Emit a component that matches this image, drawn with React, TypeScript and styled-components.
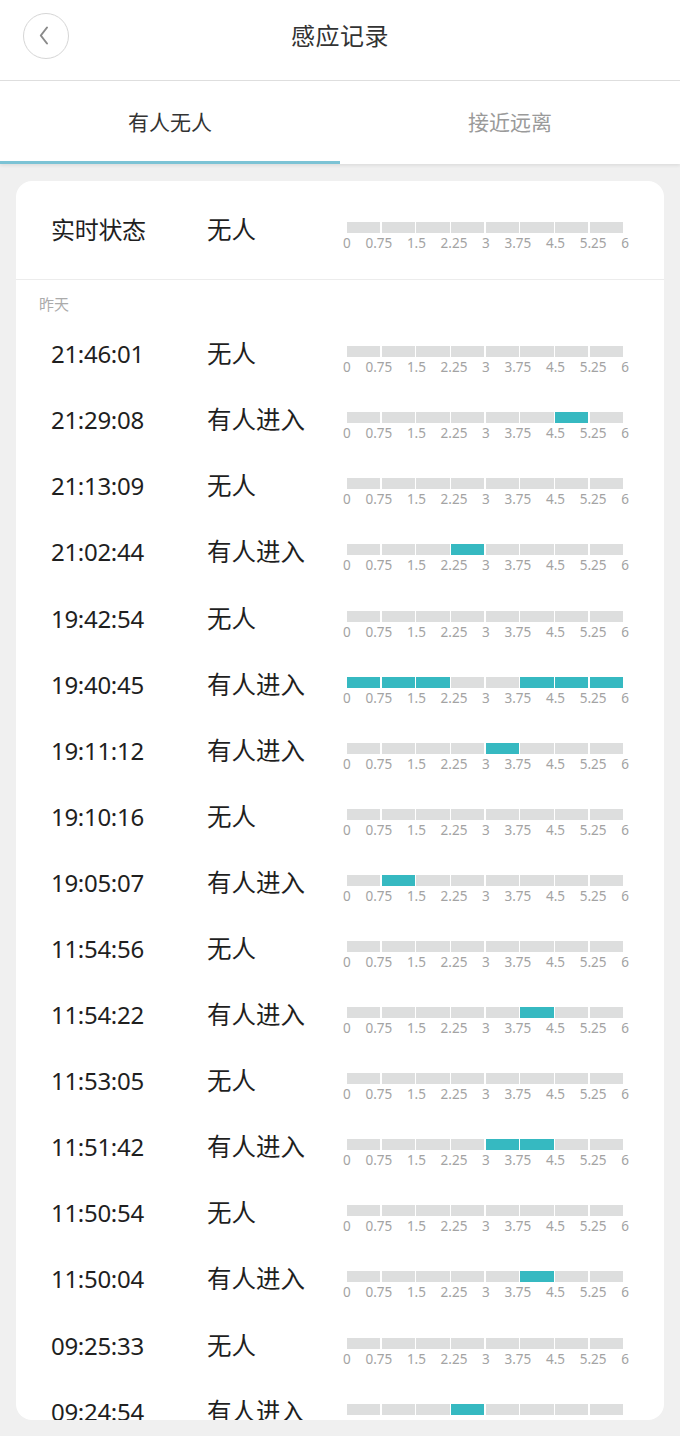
import React from "react";
import styled, { createGlobalStyle } from "styled-components";

const GlobalStyle = createGlobalStyle`
  html, body {
    margin: 0;
    padding: 0;
    background: #f0f0f0;
    font-family: "Noto Sans", "Noto Sans CJK SC", sans-serif;
  }
  * { box-sizing: border-box; }
`;

const Page = styled.div`
  width: 680px;
  height: 1436px;
  display: flex;
  flex-direction: column;
  background: #f0f0f0;
  overflow: hidden;
`;

const Header = styled.header`
  height: 81px;
  flex: none;
  background: #fff;
  border-bottom: 1px solid #dedede;
  display: grid;
  grid-template-columns: 1fr auto 1fr;
  align-items: center;
`;

const BackButton = styled.button`
  width: 46px;
  height: 46px;
  margin-left: 23px;
  margin-top: -9px;
  border-radius: 50%;
  border: 1px solid #d6d6d6;
  background: #fff;
  padding: 0 5px 0 0;
  display: flex;
  align-items: center;
  justify-content: center;
`;

const Title = styled.h1`
  margin: -12px 0 0;
  font-size: 24px;
  font-weight: 400;
  color: #333;
  letter-spacing: 0.5px;
`;

const TabBar = styled.nav`
  height: 83px;
  flex: none;
  background: #fff;
  display: flex;
  box-shadow: 0 2px 3px rgba(0, 0, 0, 0.07);
  position: relative;
  z-index: 1;
`;

const Tab = styled.div<{ $active?: boolean }>`
  flex: 1;
  display: flex;
  align-items: center;
  justify-content: center;
  font-size: 21px;
  color: ${(p) => (p.$active ? "#333" : "#9a9a9a")};
  border-bottom: 3px solid ${(p) => (p.$active ? "#7cc3d5" : "transparent")};
`;

const Content = styled.main`
  flex: 1;
  padding: 17px 16px 16px;
  display: flex;
  min-height: 0;
`;

const Card = styled.section`
  flex: 1;
  background: #fff;
  border-radius: 16px;
  overflow: hidden;
`;

const LiveSection = styled.div`
  padding: 16px 0;
  border-bottom: 1px solid #ececec;
`;

const DayLabel = styled.div`
  font-size: 15px;
  line-height: 20px;
  color: #ababab;
  padding: 14px 0 0 23px;
  margin-bottom: 7px;
`;

const Row = styled.div`
  height: 66.1px;
  display: flex;
  align-items: center;
  padding-left: 35px;
`;

const TimeCell = styled.div`
  width: 156px;
  font-size: 24px;
  line-height: 32px;
  color: #1f1f1f;
  letter-spacing: -0.3px;
`;

const StatusCell = styled.div`
  width: 140px;
  font-size: 24.5px;
  line-height: 32px;
  color: #1f1f1f;
`;

const Chart = styled.div`
  margin-top: 13px;
  width: 276px;
  display: flex;
  flex-direction: column;
  gap: 2px;
`;

const Bar = styled.div`
  display: grid;
  grid-template-columns: repeat(8, 1fr);
  gap: 1.5px;
  height: 11px;
`;

const Segment = styled.div<{ $on?: boolean }>`
  background: ${(p) => (p.$on ? "#36b9c1" : "#dddede")};
`;

const Ticks = styled.div`
  width: 286px;
  margin-left: -4px;
  display: flex;
  justify-content: space-between;
  font-size: 13.5px;
  line-height: 16px;
  color: #a3a3a3;
  font-family: "Noto Sans", sans-serif;
`;

const TICKS = ["0", "0.75", "1.5", "2.25", "3", "3.75", "4.5", "5.25", "6"];

const ChartView = ({ on }: { on: number[] }) => (
  <Chart>
    <Bar>
      {Array.from({ length: 8 }).map((_, i) => (
        <Segment key={i} $on={on.includes(i)} />
      ))}
    </Bar>
    <Ticks>
      {TICKS.map((t) => (
        <span key={t}>{t}</span>
      ))}
    </Ticks>
  </Chart>
);

const NONE = "无人";
const IN = "有人进入";

const records: { time: string; status: string; on: number[] }[] = [
  { time: "21:46:01", status: NONE, on: [] },
  { time: "21:29:08", status: IN, on: [6] },
  { time: "21:13:09", status: NONE, on: [] },
  { time: "21:02:44", status: IN, on: [3] },
  { time: "19:42:54", status: NONE, on: [] },
  { time: "19:40:45", status: IN, on: [0, 1, 2, 5, 6, 7] },
  { time: "19:11:12", status: IN, on: [4] },
  { time: "19:10:16", status: NONE, on: [] },
  { time: "19:05:07", status: IN, on: [1] },
  { time: "11:54:56", status: NONE, on: [] },
  { time: "11:54:22", status: IN, on: [5] },
  { time: "11:53:05", status: NONE, on: [] },
  { time: "11:51:42", status: IN, on: [4, 5] },
  { time: "11:50:54", status: NONE, on: [] },
  { time: "11:50:04", status: IN, on: [5] },
  { time: "09:25:33", status: NONE, on: [] },
  { time: "09:24:54", status: IN, on: [3] },
];

export default function App() {
  return (
    <>
      <GlobalStyle />
      <Page>
        <Header>
          <div>
            <BackButton aria-label="back">
              <svg width="10" height="19" viewBox="0 0 10 19" fill="none">
                <polyline
                  points="8,1.5 1.8,9.5 8,17.5"
                  stroke="#8a8a8a"
                  strokeWidth="2"
                  strokeLinecap="round"
                  strokeLinejoin="round"
                />
              </svg>
            </BackButton>
          </div>
          <Title>感应记录</Title>
          <div />
        </Header>
        <TabBar>
          <Tab $active>有人无人</Tab>
          <Tab>接近远离</Tab>
        </TabBar>
        <Content>
          <Card>
            <LiveSection>
              <Row>
                <TimeCell>实时状态</TimeCell>
                <StatusCell>无人</StatusCell>
                <ChartView on={[]} />
              </Row>
            </LiveSection>
            <DayLabel>昨天</DayLabel>
            {records.map((r) => (
              <Row key={r.time}>
                <TimeCell>{r.time}</TimeCell>
                <StatusCell>{r.status}</StatusCell>
                <ChartView on={r.on} />
              </Row>
            ))}
          </Card>
        </Content>
      </Page>
    </>
  );
}
